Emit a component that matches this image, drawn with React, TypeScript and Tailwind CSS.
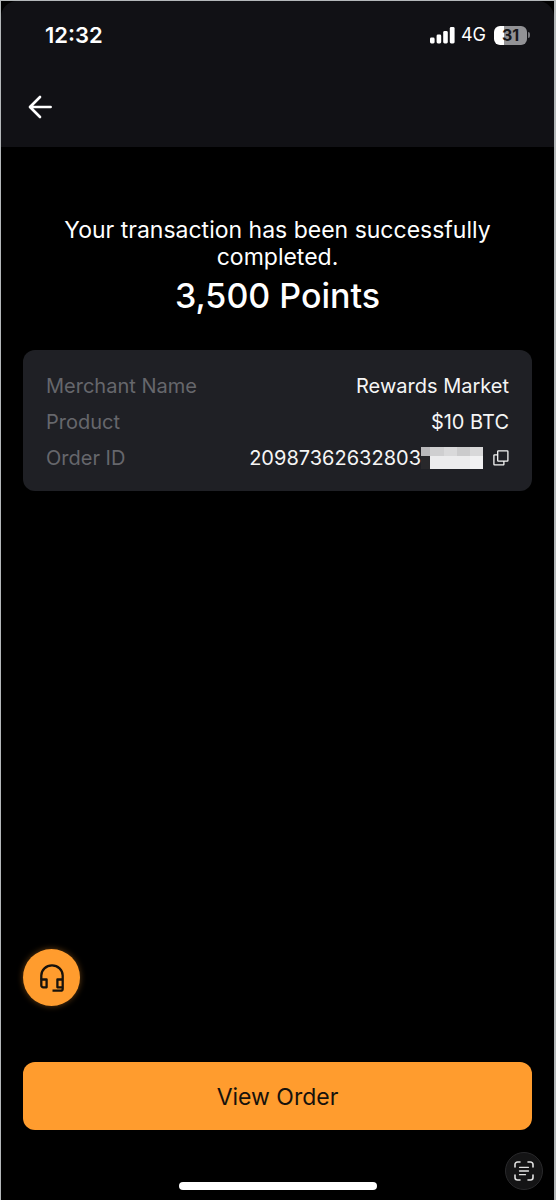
import { useState } from 'react'
import type { ReactNode } from 'react'

const ORDER_ID = '20987362632803'

function StatusBar() {
  return (
    <div className="flex items-center justify-between pt-[18px] pr-6 pl-11">
      <span className="text-[22px] leading-8 font-semibold">12:32</span>
      <div className="flex items-center">
        <svg viewBox="0 0 25 17" className="h-[17px] w-[25px]" fill="currentColor" aria-hidden="true">
          <rect x="0" y="10.5" width="4.6" height="6" rx="1.4" />
          <rect x="6.6" y="7.5" width="4.6" height="9" rx="1.4" />
          <rect x="13.2" y="4" width="4.6" height="12.5" rx="1.4" />
          <rect x="19.8" y="0" width="4.8" height="16.5" rx="1.4" />
        </svg>
        <span className="ml-1.5 text-lg leading-8">4G</span>
        <div className="ml-2 flex items-center gap-px">
          <div className="flex h-[19px] w-[33px] items-center justify-center rounded-md bg-linear-to-r from-white from-30% to-[#929295] to-30% text-base font-bold text-[#17171a]">
            31
          </div>
          <div className="h-[6px] w-[2px] rounded-r-full bg-[#77777b]" />
        </div>
      </div>
    </div>
  )
}

function DetailRow({ label, children }: { label: string; children: ReactNode }) {
  return (
    <div className="flex items-center justify-between">
      <dt className="text-[#66676c]">{label}</dt>
      <dd className="flex items-center text-[#f5f5f5]">{children}</dd>
    </div>
  )
}

function MaskedDigits() {
  return (
    <svg viewBox="0 0 62 22" className="h-[22px] w-[62px]" shapeRendering="crispEdges" aria-hidden="true">
      <rect x="0" y="0" width="9" height="9" fill="#b9b9bb" />
      <rect x="9" y="0" width="14" height="9" fill="#cfcfd0" />
      <rect x="23" y="0" width="13" height="9" fill="#d9d9da" />
      <rect x="36" y="0" width="13" height="9" fill="#cbcbcc" />
      <rect x="49" y="0" width="13" height="9" fill="#d8d8d9" />
      <rect x="0" y="9" width="9" height="13" fill="#28282b" />
      <rect x="9" y="9" width="40" height="13" fill="#ececed" />
      <rect x="49" y="9" width="13" height="13" fill="#f1f1f2" />
    </svg>
  )
}

export default function App() {
  const [copied, setCopied] = useState(false)

  const copyOrderId = () => {
    navigator.clipboard?.writeText(ORDER_ID)
    setCopied(true)
  }

  return (
    <div className="flex min-h-screen flex-col border-t border-r-2 border-l border-[#b4b8ba] bg-black font-[Inter,sans-serif] text-white">
      {/* Header */}
      <header className="rounded-t-2xl bg-[#111115] pb-6">
        <StatusBar />
        <button type="button" aria-label="Back" className="mt-10 ml-[23px] block p-1">
          <svg
            viewBox="0 0 24 24"
            className="size-6"
            fill="none"
            stroke="currentColor"
            strokeWidth="2.7"
            strokeLinecap="round"
            strokeLinejoin="round"
          >
            <path d="M22.6 12H2.5M12 2 2 12l10 10" />
          </svg>
        </button>
      </header>

      <main className="flex grow flex-col px-[22px] pt-[70px]">
        <div className="text-center">
          <p className="px-10 text-[23px] leading-[27px]">
            Your transaction has been successfully completed.
          </p>
          <h1 className="mt-[3px] text-[34px] leading-[44px] font-medium">3,500 Points</h1>
        </div>

        {/* Order details */}
        <dl className="mt-8 rounded-xl bg-[#1f2025] px-[23px] pt-[18px] pb-[15px] text-xl leading-9">
          <DetailRow label="Merchant Name">Rewards Market</DetailRow>
          <DetailRow label="Product">$10 BTC</DetailRow>
          <DetailRow label="Order ID">
            {ORDER_ID}
            <MaskedDigits />
            <button
              type="button"
              onClick={copyOrderId}
              aria-label={copied ? 'Copied' : 'Copy order ID'}
              className="ml-2.5"
            >
              <svg viewBox="0 0 16 16" className="size-4" fill="none" stroke="currentColor" strokeWidth="1.3">
                <rect x="4.7" y="0.9" width="10.2" height="10.2" rx="0.6" />
                <path d="M4.7 4.9H1.5a.6.6 0 0 0-.6.6v8.8a.6.6 0 0 0 .6.6h8.8a.6.6 0 0 0 .6-.6v-3.2" />
              </svg>
            </button>
          </DetailRow>
        </dl>

        <div className="mt-auto">
          <button
            type="button"
            aria-label="Support"
            className="flex size-[57px] items-center justify-center rounded-full bg-[#ff9c2e] text-[#17120c] shadow-[0_0_6px_rgba(255,156,46,0.4)]"
          >
            <svg viewBox="0 0 24 28" className="h-7 w-6" fill="none" stroke="currentColor" strokeWidth="2.3" strokeLinejoin="round">
              <path d="M1.3 15.5v-4A10.7 10.1 0 0 1 22.7 11.5v13.2a2 2 0 0 1-2 2H12.5" />
              <path d="M1.3 15.5H6.6v7.8H3.3a2 2 0 0 1-2-2Z" />
              <path d="M22.7 15.5H17.4v7.8h5.3" />
            </svg>
          </button>
          <button
            type="button"
            className="mt-14 h-[68px] w-full rounded-xl bg-[#ff9c2e] pt-0.5 text-[23px] text-[#17120c]"
          >
            View Order
          </button>
        </div>
      </main>

      <footer className="relative flex h-[70px] items-end justify-center pb-2.5">
        <div className="h-2 w-[198px] rounded-full bg-white" />
        <button
          type="button"
          aria-label="Scan text"
          className="absolute right-[11px] bottom-2.5 flex size-[38px] items-center justify-center rounded-full border border-[#29292b] bg-[#141415] text-[#e2e2e2]"
        >
          <svg viewBox="0 0 20 20" className="size-5" fill="none" stroke="currentColor" strokeWidth="1.6" strokeLinecap="round">
            <path d="M1 6V3.5A2.5 2.5 0 0 1 3.5 1H6M14 1h2.5A2.5 2.5 0 0 1 19 3.5V6M19 14v2.5a2.5 2.5 0 0 1-2.5 2.5H14M6 19H3.5A2.5 2.5 0 0 1 1 16.5V14" />
            <path d="M5.5 6.3h9M5.5 10h9M5.5 13.7h6" strokeWidth="1.3" />
          </svg>
        </button>
      </footer>
    </div>
  )
}
